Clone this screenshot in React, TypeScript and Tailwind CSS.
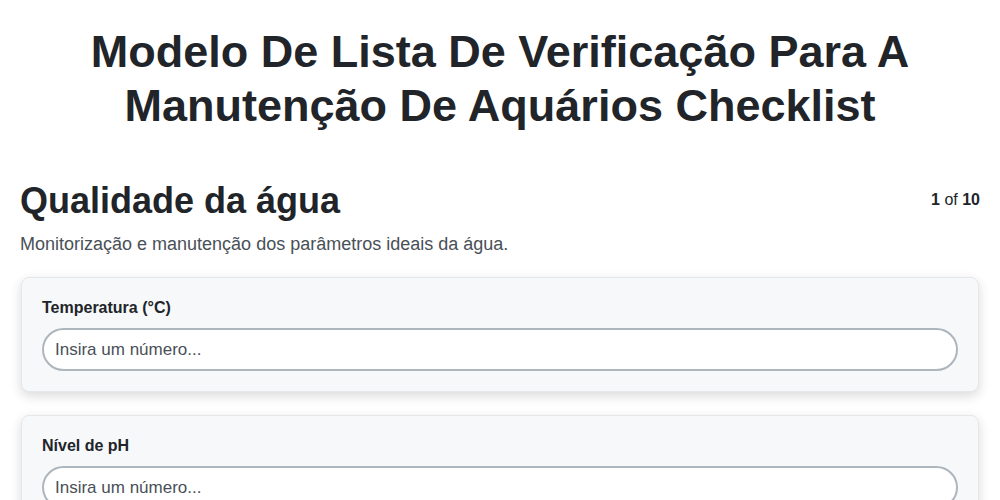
export default function App() {
  const fields = ["Temperatura (°C)", "Nível de pH", "Amônia (ppm)"];
  return (
    <div className="min-h-screen bg-white text-[#212529]" style={{ fontFamily: '"Liberation Sans", Arial, sans-serif' }}>
      <h1 className="px-5 pt-[25px] text-center text-[45px] font-bold leading-[54px]">
        Modelo De Lista De Verificação Para A<br />Manutenção De Aquários Checklist
      </h1>
      <div className="px-5 pt-[46px]">
        <div className="flex items-start justify-between">
          <h2 className="text-[36px] font-bold leading-[44px]">Qualidade da água</h2>
          <div className="pt-[11px] text-[16px] leading-[20px]">
            <span className="font-bold">1</span> of <span className="font-bold">10</span>
          </div>
        </div>
        <p className="mt-[9px] text-[18px] leading-[24px] text-[#495057]">
          Monitorização e manutenção dos parâmetros ideais da água.
        </p>
        <div className="mt-[21px] flex flex-col gap-[23px]">
          {fields.map((f) => (
            <div
              key={f}
              className="mx-[1px] rounded-lg border border-[#e5e7eb] bg-[#f7f8fa] px-5 pb-5 pt-[20px] shadow-[0_4px_12px_rgba(0,0,0,0.15)]"
            >
              <label className="block text-[16px] font-bold leading-[20px] text-[#212529]">{f}</label>
              <input
                type="text"
                placeholder="Insira um número..."
                className="mt-[10px] block h-[43px] w-full rounded-full border-2 border-[#adb5bd] bg-white px-[11px] text-[17px] text-[#212529] outline-none placeholder:text-[#495057]"
              />
            </div>
          ))}
        </div>
      </div>
    </div>
  );
}
